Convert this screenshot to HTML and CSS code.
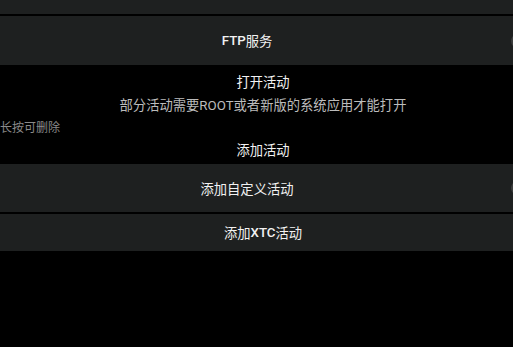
FILE: index.html
```html
<!DOCTYPE html>
<html lang="zh-CN">
<head>
	<meta charset="UTF-8">
	<title>活动</title>
	<link rel="stylesheet" href="styles.css">
</head>
<body>
	<div class="page">
		<div class="btn btn-cut"></div>
		<div class="btn knob"><span class="lat">FTP</span>服务</div>

		<div class="title">打开活动</div>
		<div class="tip">部分活动需要ROOT或者新版的系统应用才能打开</div>
		<div class="hint">长按可删除</div>
		<div class="title sub">添加活动</div>

		<div class="btn knob custom">添加自定义活动</div>
		<div class="btn short">添加<span class="lat">XTC</span>活动</div>
	</div>
</body>
</html>
```

FILE: styles.css
```css
html,body{
	margin:0;
	background-color:#000;
	overflow:hidden;
}
.page{
	width:526px;
	display:flex;
	flex-direction:column;
	font-family:Roboto,"Noto Sans CJK SC",sans-serif;
	font-size:13.3px;
	color:#f2f2f2;
}
.btn{
	position:relative;
	height:49px;
	background-color:#1e2020;
	margin-bottom:2px;
	display:flex;
	align-items:center;
	justify-content:center;
}
.btn-cut{
	height:14px;
}
.knob{
	padding-right:32px;
}
.knob::after{
	content:"";
	position:absolute;
	left:511px;
	top:50%;
	width:14px;
	height:14px;
	margin-top:-7px;
	border-radius:50%;
	background-color:#3c3d3d;
}
.custom{
	height:48px;
}
.short{
	height:37px;
}
.lat{
	font-weight:500;
}
.title{
	text-align:center;
	height:21px;
	line-height:21px;
	margin-top:5px;
}
.tip{
	text-align:center;
	color:#bcbcbc;
	height:21px;
	line-height:21px;
	margin-top:2px;
}
.hint{
	color:#8a8a8a;
	font-size:12px;
	height:24px;
	line-height:24px;
}
.sub{
	margin-top:0;
	margin-bottom:3px;
}
```
